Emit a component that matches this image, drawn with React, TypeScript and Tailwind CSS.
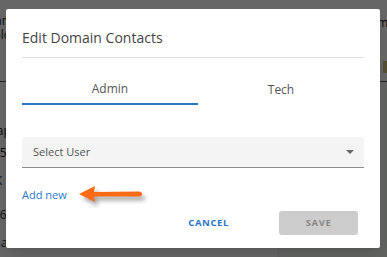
import React from 'react';

const font = "font-['Open_Sans','Liberation_Sans',sans-serif]";

// Page behind the modal, only fragments of it show at the edges
const BackgroundPage: React.FC = () => (
  <div className="flex flex-col h-full bg-white text-[12px] text-[#222] -ml-[14px]">
    <div className="flex justify-between pt-[14px]">
      <div className="flex flex-col leading-[14px]">
        <span>Name</span>
        <span>Color</span>
      </div>
      <span className="mr-[-8px]">Name</span>
    </div>
    <div className="flex justify-end mt-[16px] mr-[-4px] gap-1 items-center">
      <span className="text-[#1f5fa8]">+</span>
      <span className="w-2 h-3 bg-[#d8c47a]" />
    </div>
    <div className="mt-[5px] h-px bg-[#555]" />
    <div className="flex flex-1">
      <div className="flex flex-col pt-[42px] gap-[9px] leading-[13px] w-[60px]">
        <span>Map</span>
        <span>2051</span>
        <span className="mt-[6px]">UK</span>
        <span className="mt-[12px]">566</span>
        <span className="mt-[6px]">Char</span>
      </div>
      <div className="flex-1" />
      <div className="w-[110px] bg-[#f2f8f0]" />
    </div>
  </div>
);

const Arrow: React.FC = () => (
  <svg width="72" height="26" viewBox="0 0 72 26" className="drop-shadow-[3px_4px_2px_rgba(0,0,0,0.35)]">
    <path d="M2 10 L18 2 L17 8 L62 7.5 Q65 7.5 65 10 Q65 12.5 62 12.5 L17 12.5 L18 18 Z" fill="#ff6a14" />
  </svg>
);

export default function App() {
  return (
    <div className={`relative w-[387px] h-[257px] overflow-hidden ${font}`}>
      <BackgroundPage />
      <div className="absolute inset-0 bg-black/60" />

      <div className="absolute left-[6px] top-[9px] w-[374px] h-[239px] bg-white rounded-[2px] shadow-lg flex flex-col px-4">
        <h2 className="pt-[19px] text-[14px] leading-[20px] text-[#444] font-normal">Edit Domain Contacts</h2>
        <div className="mt-[9px] h-px bg-[#e2e2e2]" />

        <div className="flex mt-[15px]">
          <button className="w-[176px] h-[32px] flex items-center justify-center text-[12px] text-[#555] border-b-2 border-[#2a78c5] pt-[1px]">
            Admin
          </button>
          <button className="flex-1 h-[32px] flex items-center justify-center text-[12px] text-[#555] pt-[1px]">
            Tech
          </button>
        </div>

        <div className="mt-[32px] h-[31px] bg-[#f4f4f4] rounded-t-[3px] border-b border-[#8a8a8a] flex items-center justify-between pl-[11px] pr-[10px]">
          <span className="text-[11px] text-[#555]">Select User</span>
          <svg width="8" height="4" viewBox="0 0 8 4">
            <path d="M0 0 L8 0 L4 4 Z" fill="#666" />
          </svg>
        </div>

        <div className="flex items-center mt-[12px]">
          <a className="text-[11px] leading-[16px] text-[#2a78c5]">Add new</a>
          <div className="ml-[10px] mt-[4px]">
            <Arrow />
          </div>
        </div>

        <div className="flex items-center justify-end mt-[1px] pr-[6px]">
          <button className="text-[9.5px] font-bold tracking-[0.6px] text-[#2a78c5] mr-[50px]">CANCEL</button>
          <button className="w-[79px] h-[24px] rounded-[3px] bg-[#cccccc] text-[9.5px] font-bold tracking-[0.6px] text-[#888]">
            SAVE
          </button>
        </div>
      </div>
    </div>
  );
}
